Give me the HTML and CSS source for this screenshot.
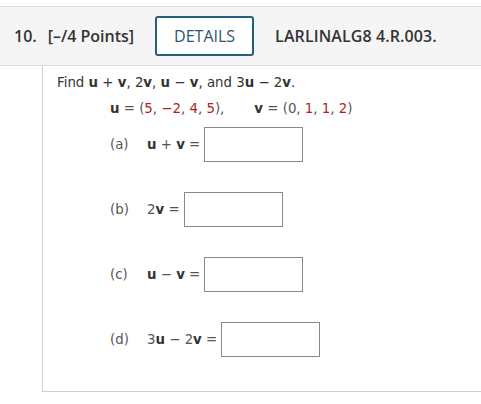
FILE: index.html
```html
<!DOCTYPE html>
<html>
<head>
<meta charset="utf-8">
<link rel="stylesheet" href="styles.css">
</head>
<body>
<div class="q-header">
  <span class="num">10.</span>
  <span class="pts">[–/4 Points]</span>
  <span class="details">DETAILS</span>
  <span class="code">LARLINALG8 4.R.003.</span>
</div>
<div class="q-body">
  <p class="prompt">Find <b>u</b> + <b>v</b>, 2<b>v</b>, <b>u</b> − <b>v</b>, and 3<b>u</b> − 2<b>v</b>.</p>
  <p class="given"><span class="vec"><b>u</b> = (<span class="red">5</span>, <span class="red">−2</span>, <span class="red">4</span>, <span class="red">5</span>),</span><span class="vec"><b>v</b> = (0, <span class="red">1</span>, <span class="red">1</span>, <span class="red">2</span>)</span></p>
  <div class="parts">
    <div class="part"><span class="lbl">(a)</span><span class="expr"><b>u</b> + <b>v</b> =</span><span class="box"></span></div>
    <div class="part"><span class="lbl">(b)</span><span class="expr">2<b>v</b> =</span><span class="box"></span></div>
    <div class="part"><span class="lbl">(c)</span><span class="expr"><b>u</b> − <b>v</b> =</span><span class="box"></span></div>
    <div class="part"><span class="lbl">(d)</span><span class="expr">3<b>u</b> − 2<b>v</b> =</span><span class="box"></span></div>
  </div>
</div>
</body>
</html>
```
FILE: styles.css
```css
html, body {
  margin: 0;
  padding: 0;
  background: #fff;
}
body {
  padding-top: 6px;
}
.q-header {
  height: 58px;
  border-top: 1px solid #dcdcdc;
  border-bottom: 1px solid #dcdcdc;
  background: #f5f5f5;
  display: flex;
  align-items: center;
  padding-left: 14px;
  font-family: "Open Sans", sans-serif;
  font-weight: 600;
  font-size: 16px;
  color: #333;
}
.num {
  margin-right: 11px;
}
.pts {
  margin-right: 21px;
}
.details {
  box-sizing: border-box;
  width: 99px;
  height: 40px;
  border: 2px solid #22607e;
  border-radius: 3px;
  background: #fff;
  color: #2b5573;
  font-weight: 400;
  display: flex;
  align-items: center;
  justify-content: center;
  margin-right: 21px;
}
.code {
  letter-spacing: 0.1px;
}
.q-body {
  margin-left: 42px;
  height: 325px;
  border-left: 1px solid #cfcfcf;
  border-bottom: 1px solid #cfcfcf;
  padding-left: 14px;
  font-family: "DejaVu Sans", Verdana, sans-serif;
  font-size: 13.33px;
  color: #333;
}
.prompt {
  margin: 0;
  padding-top: 9px;
  line-height: 16px;
}
.given {
  margin: 10px 0 0 53px;
  line-height: 16px;
  color: #555;
}
.given b { color: #333; }
.vec + .vec { margin-left: 30px; }
.red { color: #b22222; }
.parts {
  margin-top: 10px;
  margin-left: 53px;
  display: flex;
  flex-direction: column;
  gap: 30px;
}
.part {
  display: flex;
  align-items: center;
  height: 35px;
  color: #555;
}
.part b { color: #333; }
.lbl {
  width: 37px;
}
.expr {
  margin-right: 4px;
}
.box {
  box-sizing: border-box;
  width: 99px;
  height: 35px;
  border: 1px solid #888;
  background: #fff;
}
```
